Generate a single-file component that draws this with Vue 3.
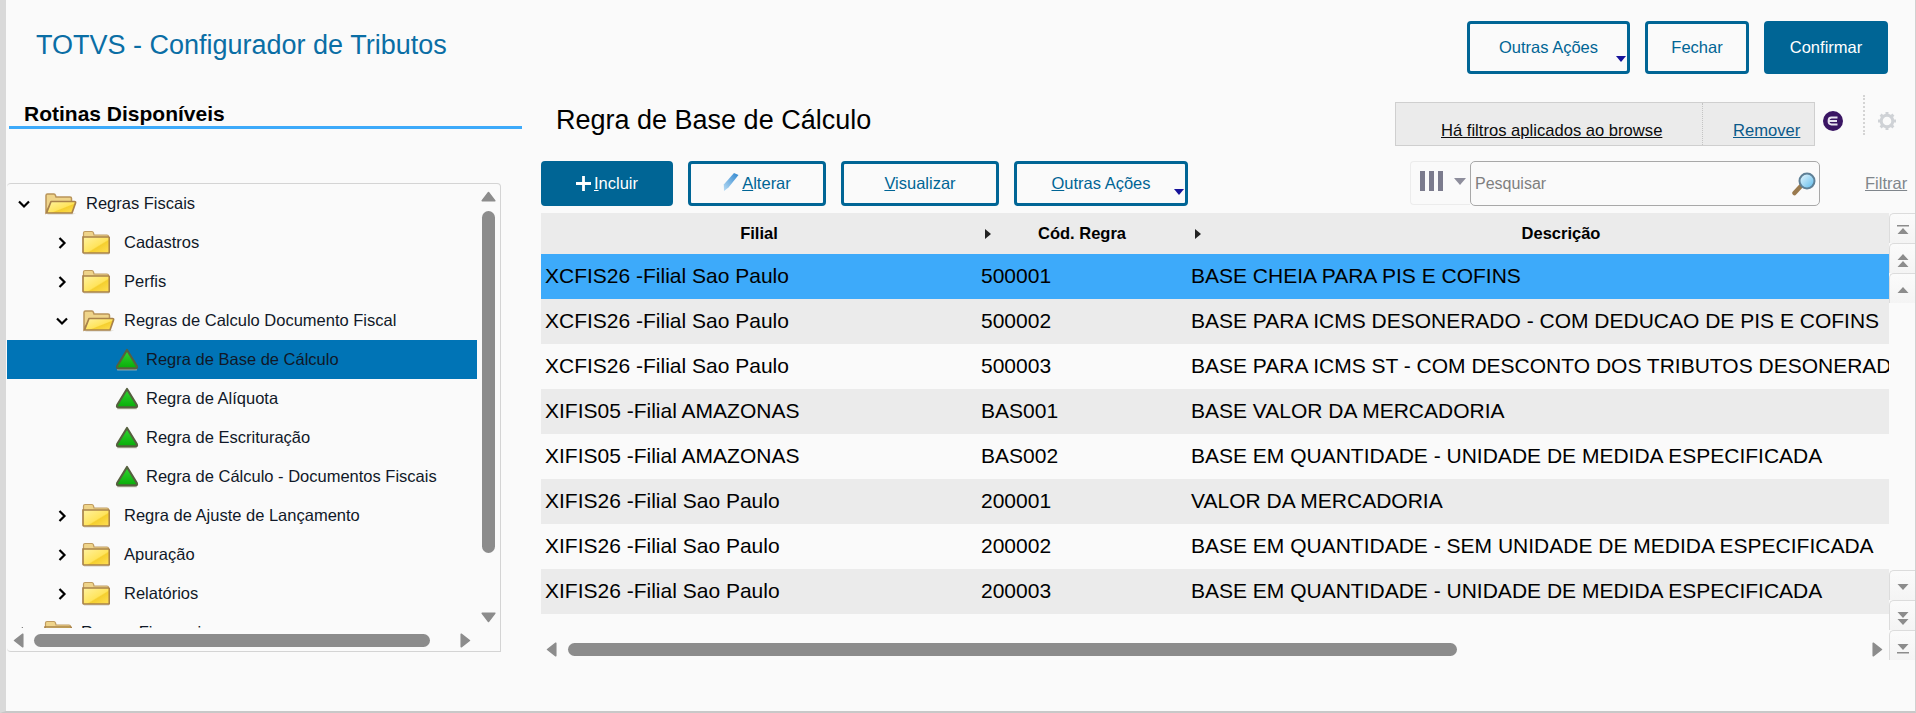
<template>
  <div class="page">
    <svg class="defs" aria-hidden="true">
      <defs>
        <linearGradient id="folderFill" x1="0" y1="0" x2="1" y2="1">
          <stop offset="0" stop-color="#fff2a0" />
          <stop offset="0.55" stop-color="#ffe45c" />
          <stop offset="0.6" stop-color="#f5cf2f" />
          <stop offset="1" stop-color="#ffdf55" />
        </linearGradient>
        <linearGradient id="greenFill" x1="0" y1="0" x2="0" y2="1">
          <stop offset="0" stop-color="#33d433" />
          <stop offset="1" stop-color="#08ad08" />
        </linearGradient>
        <linearGradient id="lensFill" x1="0" y1="0" x2="1" y2="1">
          <stop offset="0" stop-color="#eefaff" />
          <stop offset="1" stop-color="#58b8ea" />
        </linearGradient>
        <linearGradient id="penFill" x1="1" y1="0" x2="0" y2="1">
          <stop offset="0" stop-color="#2f86cf" />
          <stop offset="1" stop-color="#b9dcf4" />
        </linearGradient>
      </defs>
    </svg>

    <header class="top">
      <h1 class="app-title">TOTVS - Configurador de Tributos</h1>
      <div class="top-actions">
        <button class="btn outline wide-top">Outras Ações<i class="caret"></i></button>
        <button class="btn outline close">Fechar</button>
        <button class="btn solid confirm">Confirmar</button>
      </div>
    </header>

    <div class="content">
      <aside class="side">
        <h2 class="side-title">Rotinas Disponíveis</h2>
        <div class="tree">
          <div class="tree-main">
            <ul class="tree-rows">
              <li
                v-for="node in nodes"
                :key="node.label"
                class="tree-row"
                :class="['level-' + node.level, { selected: node.selected }]"
              >
                <svg v-if="node.state === 'open'" class="chev" viewBox="0 0 14 14">
                  <path d="M2 4.500 7 9.500 12 4.500" />
                </svg>
                <svg v-else-if="node.state === 'closed'" class="chev" viewBox="0 0 14 14">
                  <path d="M4.500 2 9.500 7 4.500 12" />
                </svg>

                <svg v-if="node.state === 'open'" class="folder-open" viewBox="0 0 33 24">
                  <path class="shade" d="M3 22.500h25l4-1H5z" />
                  <path d="M2 20V3.500Q2 2 3.500 2H10q1 0 1.500 1.500L12 5h14q1.500 0 1.500 1.500V10H8z" fill="#efd48a" stroke="#b9945a" stroke-width="1.500" />
                  <path d="M7 9.500h23.500q1.500 0 1 1.500L28 21H2.500z" fill="url(#folderFill)" stroke="#a9824a" stroke-width="1.700" stroke-linejoin="round" />
                </svg>
                <svg v-else-if="node.state === 'closed'" class="folder" viewBox="0 0 28 25">
                  <path class="shade" d="M2 23.500h25v1H2z" />
                  <path d="M1.500 6V3q0-1.500 1.500-1.500h7q1 0 1.500 1.500l.5 2h13q1.500 0 1.500 1.500V8H1.500z" fill="#efd48a" stroke="#c09c60" stroke-width="1.200" />
                  <path d="M1 7h25.500q.8 0 .8.8V22q0 1-1 1H2q-1 0-1-1z" fill="url(#folderFill)" stroke="#a9824a" stroke-width="1.700" />
                </svg>
                <svg v-else class="rule-icon" viewBox="0 0 22 21">
                  <path class="shade" d="M2 19h18v1.500H2z" />
                  <path d="M11 1.800 20 16.500Q20.800 18.700 18.500 18.700H3.500Q1.200 18.700 2 16.500z" fill="url(#greenFill)" stroke="#56603f" stroke-width="2" stroke-linejoin="round" />
                </svg>

                <span class="tree-label">{{ node.label }}</span>
              </li>
            </ul>
            <div class="tree-vbar">
              <svg class="arrow up" viewBox="0 0 15 11"><path d="M7.500 1.500 13.800 9.800H1.200z" /></svg>
              <i class="vthumb"></i>
              <svg class="arrow down" viewBox="0 0 15 11"><path d="M7.500 9.500 13.800 1.200H1.200z" /></svg>
            </div>
          </div>
          <div class="tree-hbar">
            <svg class="arrow left" viewBox="0 0 11 15"><path d="M1.500 7.500 9.800 1.200V13.800z" /></svg>
            <i class="hthumb"></i>
            <svg class="arrow right" viewBox="0 0 11 15"><path d="M9.500 7.500 1.200 1.200V13.800z" /></svg>
          </div>
        </div>
      </aside>

      <main class="browse">
        <div class="browse-head">
          <h2 class="browse-title">Regra de Base de Cálculo</h2>
          <div class="filter-box">
            <a class="filter-msg">Há filtros aplicados ao browse</a>
            <a class="filter-remove">Remover</a>
          </div>
          <svg class="badge" viewBox="0 0 20 20">
            <circle cx="10" cy="10" r="10" fill="#3a1563" />
            <path d="M14.500 6.500H8.500Q5.500 6.500 5.500 10T8.500 13.500H14.500M6 10H14" fill="none" stroke="#e8e4f0" stroke-width="1.800" />
          </svg>
          <span class="dots"></span>
          <svg class="gear" viewBox="0 0 20 20">
            <circle cx="10" cy="10" r="5.800" fill="none" stroke="#cfd2d6" stroke-width="3" />
            <path d="M10 1v3M10 16v3M1 10h3M16 10h3M3.600 3.600l2.200 2.200M14.200 14.200l2.200 2.200M3.600 16.400l2.200-2.200M14.200 5.800l2.200-2.200" stroke="#cfd2d6" stroke-width="3" />
          </svg>
        </div>

        <div class="toolbar">
          <button class="btn solid add">
            <svg class="plus" viewBox="0 0 16 16"><path d="M8 0v16M0 8h16" /></svg><span><u>I</u>ncluir</span>
          </button>
          <button class="btn outline edit">
            <svg class="pencil" viewBox="0 0 16 18"><path d="M15.500 2 5.500 14.500 1 18 .8 11.500 11 0z" fill="url(#penFill)" /></svg><span><u>A</u>lterar</span>
          </button>
          <button class="btn outline view"><span><u>V</u>isualizar</span></button>
          <button class="btn outline more"><span><u>O</u>utras Ações</span><i class="caret"></i></button>

          <div class="cols">
            <span class="bars"><i></i><i></i><i></i></span>
            <i class="cols-caret"></i>
          </div>
          <div class="search">
            <span class="search-ph">Pesquisar</span>
            <svg class="lens" viewBox="0 0 24 24">
              <path d="M9 14 2.500 21" stroke="#9a7a4e" stroke-width="4.500" stroke-linecap="round" />
              <circle cx="15" cy="9" r="7.500" fill="url(#lensFill)" stroke="#5f8096" stroke-width="2" />
            </svg>
          </div>
          <a class="filter-link">Filtrar</a>
        </div>

        <div class="grid-area">
          <div class="grid-stack">
            <div class="table-clip">
              <table class="rules">
                <colgroup>
                  <col class="col-a" />
                  <col class="col-b" />
                  <col class="col-c" />
                </colgroup>
                <thead>
                  <tr>
                    <th v-for="column in columns" :key="column.title">
                      <i v-if="column.marker" class="th-mark"></i>{{ column.title }}
                    </th>
                  </tr>
                </thead>
                <tbody>
                  <tr v-for="(row, index) in rows" :key="row[1]" :class="{ current: index === 0 }">
                    <td v-for="(item, i) in row" :key="i">{{ item }}</td>
                  </tr>
                </tbody>
              </table>
            </div>
            <div class="grid-hbar">
              <svg class="arrow left" viewBox="0 0 11 15"><path d="M1.500 7.500 9.800 1.200V13.800z" /></svg>
              <i class="grid-thumb"></i>
              <svg class="arrow right" viewBox="0 0 11 15"><path d="M9.500 7.500 1.200 1.200V13.800z" /></svg>
            </div>
          </div>
          <div class="pager">
            <div class="pager-group">
              <button v-for="p in pagerTop" :key="p.name" class="pager-btn">
                <svg viewBox="0 0 14 18"><path :d="p.d" /></svg>
              </button>
            </div>
            <div class="pager-group">
              <button v-for="p in pagerBottom" :key="p.name" class="pager-btn">
                <svg viewBox="0 0 14 18"><path :d="p.d" /></svg>
              </button>
            </div>
          </div>
        </div>
      </main>
    </div>
  </div>
</template>

<script setup>
const nodes = [
  { label: "Regras Fiscais", level: 0, state: "open" },
  { label: "Cadastros", level: 1, state: "closed" },
  { label: "Perfis", level: 1, state: "closed" },
  { label: "Regras de Calculo Documento Fiscal", level: 1, state: "open" },
  { label: "Regra de Base de Cálculo", level: 2, state: "leaf", selected: true },
  { label: "Regra de Alíquota", level: 2, state: "leaf" },
  { label: "Regra de Escrituração", level: 2, state: "leaf" },
  { label: "Regra de Cálculo - Documentos Fiscais", level: 2, state: "leaf" },
  { label: "Regra de Ajuste de Lançamento", level: 1, state: "closed" },
  { label: "Apuração", level: 1, state: "closed" },
  { label: "Relatórios", level: 1, state: "closed" },
  { label: "Regras Financeiras", level: 0, state: "closed" },
];

const columns = [
  { title: "Filial" },
  { title: "Cód. Regra", marker: true },
  { title: "Descrição", marker: true },
];

const rows = [
  ["XCFIS26 -Filial Sao Paulo", "500001", "BASE CHEIA PARA PIS E COFINS"],
  ["XCFIS26 -Filial Sao Paulo", "500002", "BASE PARA ICMS DESONERADO - COM DEDUCAO DE PIS E COFINS"],
  ["XCFIS26 -Filial Sao Paulo", "500003", "BASE PARA ICMS ST - COM DESCONTO DOS TRIBUTOS DESONERADOS"],
  ["XIFIS05 -Filial AMAZONAS", "BAS001", "BASE VALOR DA MERCADORIA"],
  ["XIFIS05 -Filial AMAZONAS", "BAS002", "BASE EM QUANTIDADE - UNIDADE DE MEDIDA ESPECIFICADA"],
  ["XIFIS26 -Filial Sao Paulo", "200001", "VALOR DA MERCADORIA"],
  ["XIFIS26 -Filial Sao Paulo", "200002", "BASE EM QUANTIDADE - SEM UNIDADE DE MEDIDA ESPECIFICADA"],
  ["XIFIS26 -Filial Sao Paulo", "200003", "BASE EM QUANTIDADE - UNIDADE DE MEDIDA ESPECIFICADA"],
];

const pagerTop = [
  { name: "first", d: "M1 3h12v1.500H1zM7 6l5.500 6h-11z" },
  { name: "page-up", d: "M7 2l5.500 6h-11zM7 9l5.500 6h-11z" },
  { name: "up", d: "M7 5l5.500 6h-11z" },
];

const pagerBottom = [
  { name: "down", d: "M7 11 1.500 5h11z" },
  { name: "page-down", d: "M7 9 1.500 3h11zM7 16 1.500 10h11z" },
  { name: "last", d: "M7 11 1.500 5h11zM1 13h12v1.500H1z" },
];
</script>

<style>
html,
body {
  margin: 0;
  background: #fafafa;
}
</style>

<style scoped>
.page {
  width: 1916px;
  height: 713px;
  box-sizing: border-box;
  border-left: 6px solid #d9d9d9;
  border-right: 1px solid #d0d0d0;
  border-bottom: 2px solid #c8c8c8;
  background: #fafafa;
  font-family: "Liberation Sans", Arial, sans-serif;
  color: #000;
  overflow: hidden;
}
.defs {
  display: block;
  width: 0;
  height: 0;
}
ul {
  list-style: none;
  margin: 0;
  padding: 0;
}
h1,
h2 {
  margin: 0;
  font-weight: normal;
}
button {
  font-family: inherit;
  cursor: pointer;
}
i {
  display: block;
}

/* top bar */
.top {
  height: 95px;
  box-sizing: border-box;
  padding: 21px 27px 0 30px;
  display: flex;
  justify-content: space-between;
}
.app-title {
  font-size: 27px;
  line-height: 48px;
  color: #0a6ea5;
}
.top-actions {
  display: flex;
  gap: 15px;
}
.btn {
  position: relative;
  box-sizing: border-box;
  height: 53px;
  border-radius: 4px;
  font-size: 16.500px;
  padding: 0;
  display: flex;
  align-items: center;
  justify-content: center;
}
.outline {
  background: #fafafa;
  border: 3px solid #006595;
  color: #006595;
}
.solid {
  background: #006595;
  border: 3px solid #006595;
  color: #fff;
}
.wide-top {
  width: 163px;
}
.close {
  width: 104px;
}
.confirm {
  width: 124px;
}
.caret {
  position: absolute;
  right: 1px;
  bottom: 9px;
  border-left: 5.500px solid transparent;
  border-right: 5.500px solid transparent;
  border-top: 6px solid #16129a;
}

/* layout */
.content {
  display: flex;
}
.side {
  width: 535px;
  flex: none;
}
.browse {
  flex: 1;
  min-width: 0;
}

/* left tree */
.side-title {
  box-sizing: border-box;
  height: 34px;
  margin: 0 19px 0 3px;
  padding: 7px 0 0 15px;
  border-bottom: 3px solid #3daafa;
  font-size: 21px;
  line-height: 23px;
  font-weight: bold;
}
.tree {
  box-sizing: border-box;
  width: 494px;
  height: 469px;
  margin: 54px 0 0 1px;
  border: 1px solid #d4d4d4;
  border-left: 0;
  border-radius: 4px 4px 0 4px;
}
.tree-main {
  display: flex;
  height: 444px;
}
.tree-rows {
  width: 470px;
  height: 444px;
  overflow: hidden;
  flex: none;
}
.tree-row {
  height: 39px;
  display: flex;
  align-items: center;
  font-size: 16.500px;
  color: #101828;
  white-space: nowrap;
}
.tree-row.selected {
  background: #0074b6;
}
.chev {
  flex: none;
  width: 14px;
  height: 14px;
  fill: none;
  stroke: #000;
  stroke-width: 2.200;
}
.level-0 {
  padding-left: 10px;
}
.level-1 {
  padding-left: 48px;
}
.level-2 {
  padding-left: 108px;
}
.folder-open {
  flex: none;
  width: 33px;
  height: 24px;
  margin-left: 13px;
}
.folder {
  flex: none;
  width: 28px;
  height: 25px;
  margin-left: 13px;
}
.shade {
  fill: #c9c4b8;
  opacity: 0.8;
}
.rule-icon {
  flex: none;
  width: 24px;
  height: 23px;
}
.level-0 .tree-label {
  margin-left: 9px;
}
.level-1 .tree-label {
  margin-left: 14px;
}
.level-1 .folder-open + .tree-label {
  margin-left: 9px;
}
.level-2 .tree-label {
  margin-left: 7px;
}

/* scrollbars */
.arrow {
  display: block;
  flex: none;
  fill: #8c8c8c;
  stroke: #8c8c8c;
  stroke-width: 1.500;
  stroke-linejoin: round;
}
.arrow.up,
.arrow.down {
  width: 15px;
  height: 11px;
}
.arrow.left,
.arrow.right {
  width: 11px;
  height: 15px;
}
.tree-vbar {
  width: 23px;
  box-sizing: border-box;
  padding: 7px 0 5px 4px;
  display: flex;
  flex-direction: column;
  align-items: flex-start;
}
.vthumb {
  width: 13px;
  height: 343px;
  margin: 9px 0 59px 1px;
  border-radius: 7px;
  background: #8c8c8c;
}
.tree-hbar {
  display: flex;
  align-items: center;
  height: 13px;
  margin-top: 6px;
  padding-left: 6px;
}
.hthumb {
  width: 396px;
  height: 13px;
  margin: 0 30px 0 10px;
  border-radius: 7px;
  background: #8c8c8c;
}

/* browse header */
.browse-head {
  height: 66px;
  box-sizing: border-box;
  display: flex;
  align-items: flex-start;
}
.browse-title {
  flex: 1;
  padding: 9px 0 0 15px;
  font-size: 27px;
  line-height: 32px;
  color: #000;
}
.filter-box {
  box-sizing: border-box;
  width: 420px;
  height: 44px;
  margin-top: 7px;
  display: flex;
  background: #ebebeb;
  border: 1px solid #cfcfcf;
  font-size: 16.600px;
}
.filter-msg {
  width: 307px;
  box-sizing: border-box;
  padding: 18px 0 0 45px;
  text-decoration: underline;
  color: #0c0c0c;
  border-right: 1px dotted #c4c4c4;
  white-space: nowrap;
}
.filter-remove {
  flex: 1;
  padding: 18px 0 0 30px;
  text-decoration: underline;
  color: #0b5a8a;
}
.badge {
  flex: none;
  width: 20px;
  height: 20px;
  margin: 16px 0 0 8px;
}
.dots {
  width: 0;
  height: 40px;
  margin-left: 20px;
  border-left: 2px dotted #d4d4d4;
}
.gear {
  flex: none;
  width: 20px;
  height: 20px;
  margin: 16px 18px 0 12px;
}

/* toolbar */
.toolbar {
  height: 45px;
  display: flex;
  align-items: flex-start;
}
.toolbar .btn {
  height: 45px;
  margin-right: 15px;
}
.add {
  width: 132px;
  margin-left: 0;
  gap: 3px;
}
.plus {
  width: 15px;
  height: 15px;
  fill: none;
  stroke: #fff;
  stroke-width: 3;
}
.edit {
  width: 138px;
  gap: 3px;
}
.pencil {
  width: 16px;
  height: 18px;
  margin-top: -4px;
}
.view {
  width: 158px;
}
.more {
  width: 174px;
}
.more .caret {
  bottom: 8px;
}
.cols {
  box-sizing: border-box;
  width: 60px;
  height: 44px;
  margin-left: 207px;
  border: 1px solid #ececec;
  border-right: 0;
  border-radius: 4px 0 0 4px;
  display: flex;
  padding: 9px 0 0 9px;
}
.bars {
  display: flex;
  gap: 4px;
}
.bars i {
  width: 5px;
  height: 20px;
  background: #7b7b8d;
}
.cols-caret {
  margin: 7px 0 0 11px;
  border-left: 6px solid transparent;
  border-right: 6px solid transparent;
  border-top: 7px solid #8e8e9c;
}
.search {
  box-sizing: border-box;
  width: 350px;
  height: 45px;
  border: 1px solid #a8a8a8;
  border-radius: 5px;
  padding-left: 4px;
  display: flex;
  align-items: center;
  justify-content: space-between;
}
.search-ph {
  font-size: 16px;
  color: #7f7f7f;
}
.lens {
  width: 24px;
  height: 24px;
  margin-right: 3px;
}
.filter-link {
  margin-left: 45px;
  font-size: 16.500px;
  line-height: 45px;
  color: #80868c;
  text-decoration: underline;
}

/* table */
.grid-area {
  display: flex;
  margin-top: 7px;
}
.grid-stack {
  width: 1348px;
  flex: none;
}
.table-clip {
  height: 401px;
  overflow: hidden;
}
.rules {
  width: 1394px;
  table-layout: fixed;
  border-collapse: collapse;
}
.col-a {
  width: 436px;
}
.col-b {
  width: 210px;
}
.col-c {
  width: 748px;
}
.rules th {
  position: relative;
  height: 41px;
  padding: 0;
  background: #ebebeb;
  font-size: 16.500px;
  font-weight: bold;
  text-align: center;
}
.th-mark {
  position: absolute;
  left: 8px;
  top: 16px;
  border-top: 5px solid transparent;
  border-bottom: 5px solid transparent;
  border-left: 6px solid #222;
}
.rules td {
  box-sizing: border-box;
  height: 45px;
  padding: 0 0 2px 4px;
  font-size: 21px;
  white-space: nowrap;
  overflow: hidden;
}
.rules tbody tr:nth-child(even) td {
  background: #ebebeb;
}
.rules tbody tr.current td {
  background: #3daafa;
}
.grid-hbar {
  display: flex;
  align-items: center;
  height: 14px;
  margin: 28px 0 0 5px;
}
.grid-thumb {
  width: 889px;
  height: 13px;
  margin: 0 415px 0 11px;
  border-radius: 7px;
  background: #8c8c8c;
}

/* pager */
.pager {
  flex: 1;
  display: flex;
  flex-direction: column;
  justify-content: space-between;
  height: 447px;
}
.pager-group {
  display: flex;
  flex-direction: column;
}
.pager-btn {
  box-sizing: border-box;
  width: 100%;
  height: 30px;
  padding: 5px 0 0 0;
  background: linear-gradient(#fbfbfb, #f4f4f4);
  border: 1px solid #dcdcdc;
  border-right: 0;
  border-bottom: 0;
  border-radius: 5px 0 0 0;
}
.pager-btn svg {
  display: block;
  width: 14px;
  height: 18px;
  margin: 0 auto;
  fill: #8c8c8c;
}
</style>
